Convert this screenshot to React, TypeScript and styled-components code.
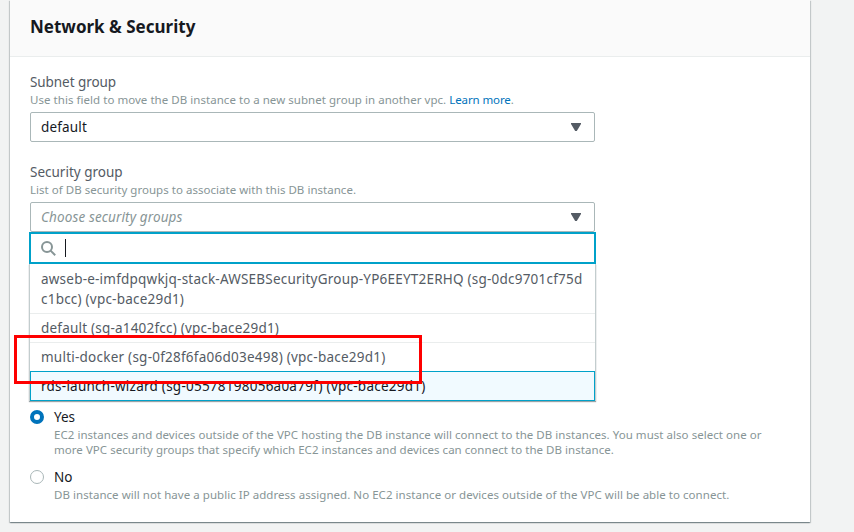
import React from 'react';
import styled, { createGlobalStyle } from 'styled-components';

const GlobalStyle = createGlobalStyle`
  * { box-sizing: border-box; }
  body {
    margin: 0;
    background: #f2f3f3;
    font-family: "Noto Sans", "Open Sans", sans-serif;
    font-size: 13.5px;
    color: #16191f;
  }
`;

const Page = styled.main`
  position: relative;
  height: 532px;
  padding: 0 44px 10px 10px;
  overflow: hidden;
`;

const Panel = styled.section`
  height: 522px;
  background: #fff;
  box-shadow:
    0 1px 1px 0 rgba(0, 28, 36, 0.3),
    1px 1px 1px 0 rgba(0, 28, 36, 0.15),
    -1px 1px 1px 0 rgba(0, 28, 36, 0.15);
`;

const PanelHeader = styled.header`
  display: flex;
  align-items: center;
  height: 57px;
  padding: 0 20px 2px;
  background: #fafafa;
  border-bottom: 1px solid #eaeded;
`;

const Title = styled.h2`
  margin: 0;
  font-size: 17px;
  font-weight: 700;
  line-height: 24px;
`;

const PanelBody = styled.div`
  padding: 15px 20px 0;
`;

const Field = styled.div`
  position: relative;
  width: 565px;
  height: 90px;
`;

const Label = styled.div<{ $spacing: number }>`
  line-height: 20px;
  letter-spacing: ${(p) => p.$spacing}px;
  color: #545b64;
`;

const Hint = styled.div<{ $spacing?: number }>`
  font-size: 11.5px;
  line-height: 15px;
  letter-spacing: ${(p) => p.$spacing ?? 0.042}px;
  color: #879596;
  white-space: nowrap;
`;

const Link = styled.a`
  color: #0073bb;
  letter-spacing: -0.1px;
`;

const Select = styled.div<{ $placeholder?: boolean }>`
  display: flex;
  align-items: center;
  justify-content: space-between;
  height: 30px;
  margin-top: 5px;
  padding: 0 13px 0 10px;
  border: 1px solid #aab7b8;
  border-radius: 2px;
  letter-spacing: ${(p) => (p.$placeholder ? 0.13 : 0.16)}px;
  color: ${(p) => (p.$placeholder ? '#879596' : '#16191f')};
  font-style: ${(p) => (p.$placeholder ? 'italic' : 'normal')};
`;

const Dropdown = styled.div`
  position: absolute;
  z-index: 1;
  top: 70px;
  left: -1px;
  width: 567px;
`;

const Search = styled.div`
  display: flex;
  align-items: center;
  height: 32px;
  padding-left: 10px;
  border: 2px solid #00a1c9;
  background: #fff;
`;

const Caret = styled.span`
  width: 1px;
  height: 18px;
  margin-left: 9px;
  background: #16191f;
`;

const Options = styled.ul`
  margin: 0;
  padding: 0;
  list-style: none;
  background: #fff;
  border: solid #c3cdce;
  border-width: 0 1px;
  box-shadow: 0 1px 1px 0 rgba(0, 28, 36, 0.4);
`;

const Option = styled.li<{ $spacing: number }>`
  padding: 5px 11px 4px;
  border-bottom: 1px solid #eaeded;
  line-height: 19px;
  letter-spacing: ${(p) => p.$spacing}px;
  color: #545b64;
  white-space: nowrap;
`;

const WrappedOption = styled(Option)`
  line-height: 20px;
`;

const ActiveOption = styled(Option)`
  margin-top: -1px;
  padding: 5px 10px 4px;
  border: 1px solid #00a1c9;
  background: #f1faff;
  color: #16191f;
`;

const RadioGroup = styled.div`
  display: flex;
  flex-direction: column;
  gap: 10px;
  padding-top: 155px;
`;

const RadioRow = styled.div`
  display: flex;
  gap: 10px;
`;

const Radio = styled.span<{ $checked?: boolean }>`
  flex: none;
  width: 14px;
  height: 14px;
  margin-top: 3px;
  border: ${(p) => (p.$checked ? '4px solid #0073bb' : '1px solid #aab7b8')};
  border-radius: 50%;
  background: #fff;
`;

const RadioLabel = styled.div`
  line-height: 20px;
`;

const Highlight = styled.div`
  position: absolute;
  z-index: 2;
  left: 14px;
  top: 335px;
  width: 408px;
  height: 49px;
  border: 3px solid #fe0000;
`;

const Arrow = () => (
  <svg width="10" height="8" viewBox="0 0 10 8">
    <path d="M0 0h10v1L5.8 8H4.2L0 1z" fill="#545b64" />
  </svg>
);

const SearchIcon = () => (
  <svg width="15" height="15" viewBox="0 0 15 15" fill="none" stroke="#879596" strokeWidth="2">
    <circle cx="6" cy="6" r="5" />
    <path d="M9.6 9.6l4.6 4.6" />
  </svg>
);

export default function App() {
  return (
    <Page>
      <GlobalStyle />
      <Panel>
        <PanelHeader>
          <Title>Network &amp; Security</Title>
        </PanelHeader>
        <PanelBody>
          <Field>
            <Label $spacing={-0.07}>Subnet group</Label>
            <Hint>
              Use this field to move the DB instance to a new subnet group in another vpc.{' '}
              <Link>Learn more</Link>.
            </Hint>
            <Select>
              default
              <Arrow />
            </Select>
          </Field>
          <Field>
            <Label $spacing={0}>Security group</Label>
            <Hint $spacing={0.028}>List of DB security groups to associate with this DB instance.</Hint>
            <Select $placeholder>
              Choose security groups
              <Arrow />
            </Select>
            <Dropdown>
              <Search>
                <SearchIcon />
                <Caret />
              </Search>
              <Options>
                <WrappedOption $spacing={0.218}>
                  awseb-e-imfdpqwkjq-stack-AWSEBSecurityGroup-YP6EEYT2ERHQ (sg-0dc9701cf75d
                  <br />
                  c1bcc) (vpc-bace29d1)
                </WrappedOption>
                <Option $spacing={0.206}>default (sg-a1402fcc) (vpc-bace29d1)</Option>
                <Option $spacing={0.238}>multi-docker (sg-0f28f6fa06d03e498) (vpc-bace29d1)</Option>
                <ActiveOption $spacing={0.243}>
                  rds-launch-wizard (sg-05578198056a0a79f) (vpc-bace29d1)
                </ActiveOption>
              </Options>
            </Dropdown>
          </Field>
          <RadioGroup>
            <RadioRow>
              <Radio $checked />
              <div>
                <RadioLabel>Yes</RadioLabel>
                <Hint>
                  EC2 instances and devices outside of the VPC hosting the DB instance will connect to the DB
                  instances. You must also select one or
                  <br />
                  more VPC security groups that specify which EC2 instances and devices can connect to the DB
                  instance.
                </Hint>
              </div>
            </RadioRow>
            <RadioRow>
              <Radio />
              <div>
                <RadioLabel>No</RadioLabel>
                <Hint>
                  DB instance will not have a public IP address assigned. No EC2 instance or devices outside of
                  the VPC will be able to connect.
                </Hint>
              </div>
            </RadioRow>
          </RadioGroup>
        </PanelBody>
      </Panel>
      <Highlight />
    </Page>
  );
}
